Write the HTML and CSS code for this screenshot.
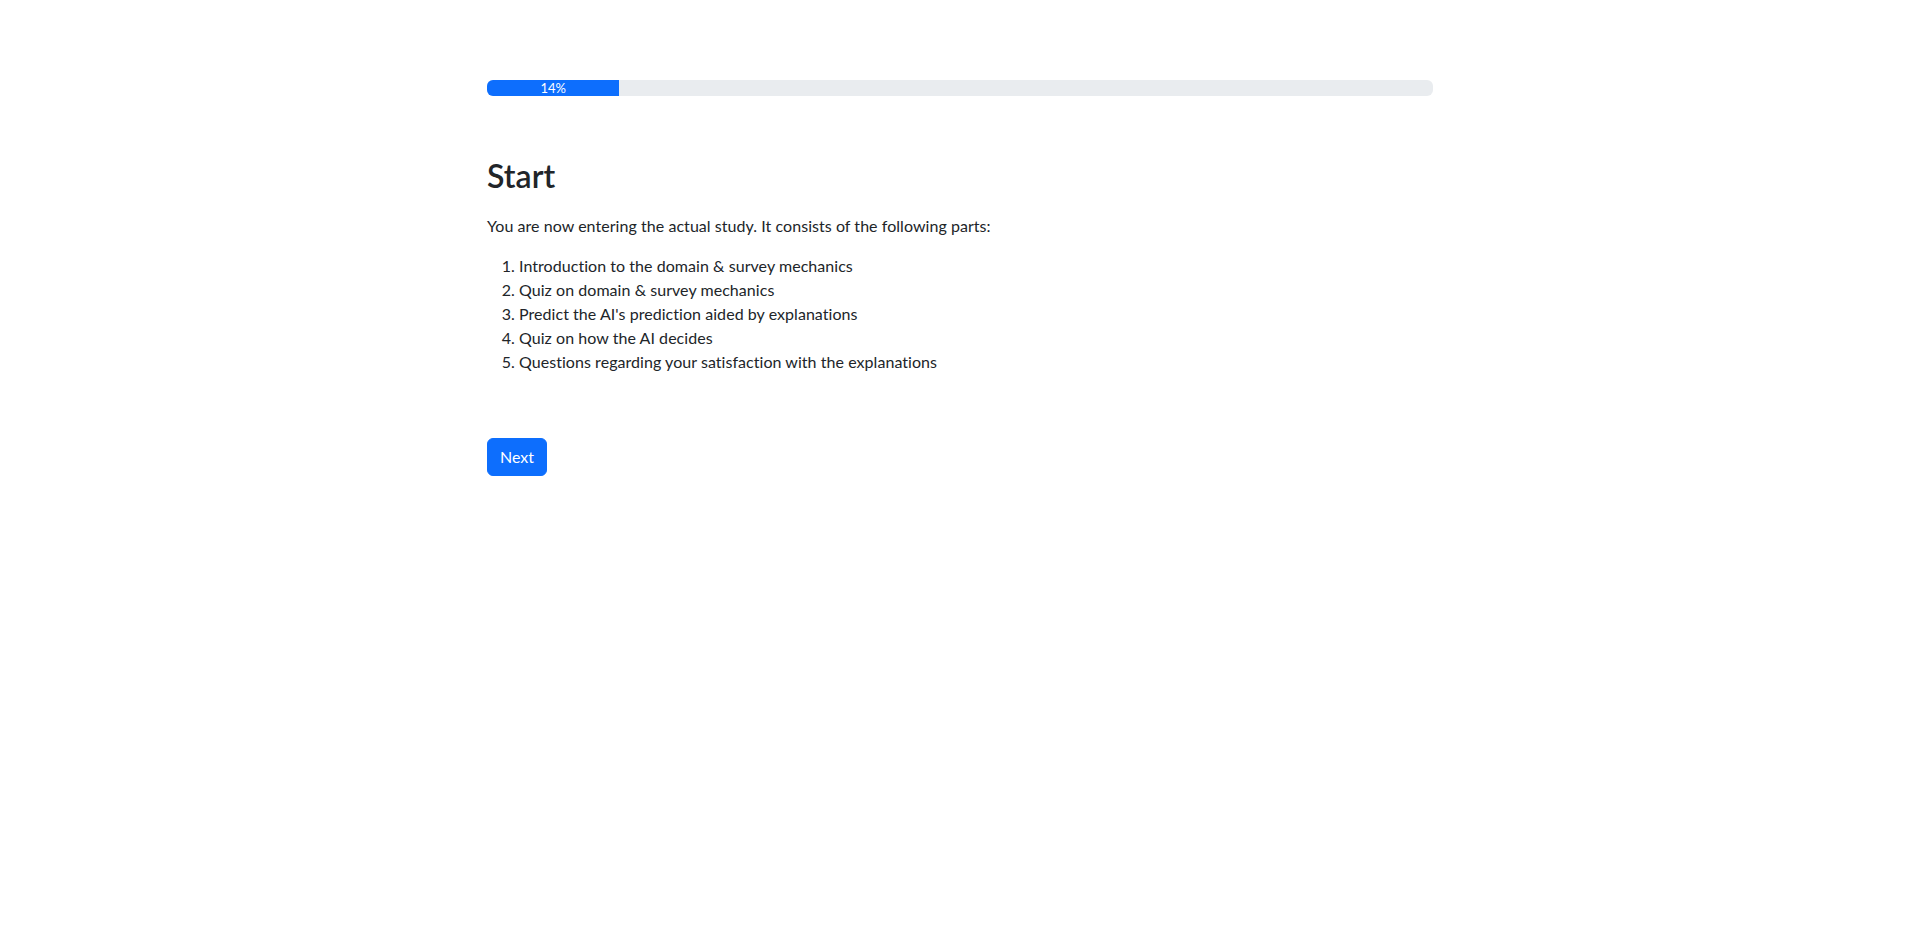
FILE: index.html
```html
<!DOCTYPE html>
<html lang="en">

<head>
    <meta charset="utf-8">
    <title>Study - Start</title>
    <link rel="stylesheet" href="styles.css">
</head>

<body>
    <div class="container">
        <div class="progress">
            <div class="progress-bar" style="width: 14%">14%</div>
        </div>

        <h2 class="page-title">Start</h2>
        <p>You are now entering the actual study. It consists of the following parts:</p>
        <ol class="parts">
            <li>Introduction to the domain &amp; survey mechanics</li>
            <li>Quiz on domain &amp; survey mechanics</li>
            <li>Predict the AI's prediction aided by explanations</li>
            <li>Quiz on how the AI decides</li>
            <li>Questions regarding your satisfaction with the explanations</li>
        </ol>

        <button class="btn-primary" type="button">Next</button>
    </div>
</body>

</html>
```

FILE: styles.css
```css
:root {
    --primary: #0d6efd;
    --text: #212529;
    --track: #e9ecef;
}

body {
    margin: 0;
    font-family: Lato, "Noto Sans", sans-serif;
    font-size: 16px;
    line-height: 1.5;
    letter-spacing: 0.05px;
    color: var(--text);
    background: #fff;
}

.container {
    width: 946px;
    margin: 0 auto;
    padding-top: 80px;
}

.progress {
    display: flex;
    height: 16px;
    background: var(--track);
    border-radius: 6px;
    overflow: hidden;
    margin-bottom: 61px;
}

.progress-bar {
    display: flex;
    align-items: center;
    justify-content: center;
    background: var(--primary);
    color: #fff;
    font-size: 13px;
    line-height: 1;
}

.page-title {
    margin: 0 0 19px;
    font-size: 32px;
    font-weight: 600;
    line-height: 1.2;
}

p {
    margin: 0 0 16px;
}

.parts {
    margin: 0 0 64px;
    padding-left: 32px;
}

.btn-primary {
    padding: 6px 12px;
    border: 1px solid var(--primary);
    border-radius: 6px;
    background: var(--primary);
    color: #fff;
    font-family: inherit;
    font-size: 16px;
    line-height: 1.5;
    cursor: pointer;
}
```
